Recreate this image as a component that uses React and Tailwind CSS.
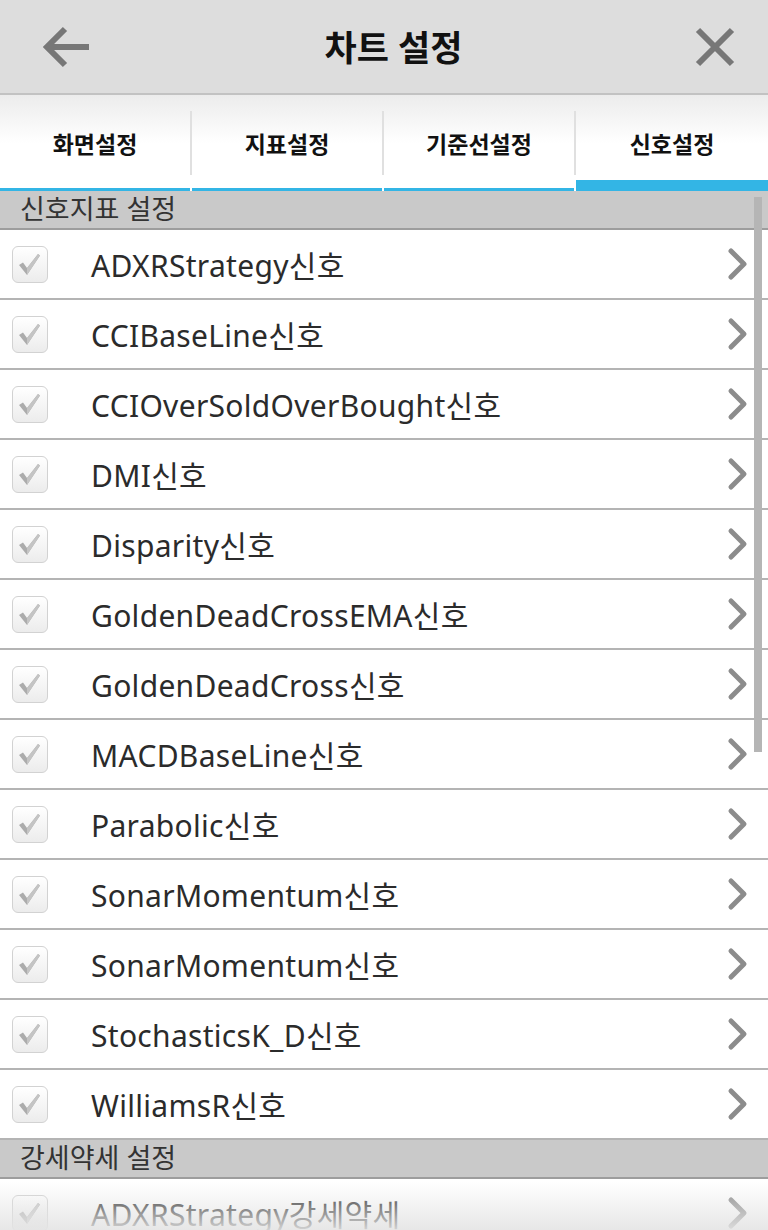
import React from "react";

const SIGNALS = [
  "ADXRStrategy신호",
  "CCIBaseLine신호",
  "CCIOverSoldOverBought신호",
  "DMI신호",
  "Disparity신호",
  "GoldenDeadCrossEMA신호",
  "GoldenDeadCross신호",
  "MACDBaseLine신호",
  "Parabolic신호",
  "SonarMomentum신호",
  "SonarMomentum신호",
  "StochasticsK_D신호",
  "WilliamsR신호",
];

const TABS = ["화면설정", "지표설정", "기준선설정", "신호설정"];

const FONT = { fontFamily: '"Noto Sans", "Noto Sans CJK KR", sans-serif' };

function CheckBox() {
  return (
    <div className="ml-3 flex h-[37px] w-9 shrink-0 items-center justify-center rounded-md border border-[#d2d2d2] bg-gradient-to-b from-white to-[#ececec]">
      <svg width="26" height="26" viewBox="0 0 26 26">
        <path d="M2 14 L6 11.5 L10 17 L21 3 L23 4.5 L10 24 Z" fill="#acacac" />
        <path d="M10 17 L21 3 L23 4.5 L10 24 Z" fill="#c4c4c4" />
      </svg>
    </div>
  );
}

function Chevron() {
  return (
    <svg width="22" height="34" viewBox="0 0 22 34" className="ml-auto mr-[19px] shrink-0">
      <polyline points="4,4 17,17 4,30" fill="none" stroke="#8c8c8c" strokeWidth="5" strokeLinecap="round" strokeLinejoin="round" />
    </svg>
  );
}

function Row({ label }) {
  return (
    <div className="flex h-[70px] items-center border-b-2 border-[#b4b4b4] bg-white">
      <CheckBox />
      <span className="ml-[43px] pt-[2px] text-[30px] tracking-[0.3px] whitespace-nowrap text-[#2b2b2b]" style={FONT}>
        {label}
      </span>
      <Chevron />
    </div>
  );
}

function Section({ title }) {
  return (
    <div className="flex h-[39px] items-center border-b-2 border-[#9d9d9d] bg-[#c9c9c9] pl-[20px]">
      <span className="text-[27px] text-[#333]" style={FONT}>
        {title}
      </span>
    </div>
  );
}

export default function App() {
  return (
    <div className="relative h-[1230px] w-[768px] overflow-hidden bg-white" style={FONT}>
      {/* top bar */}
      <div className="flex h-[95px] items-center border-b-2 border-[#c2c2c2] bg-[#dddddd]">
        <svg width="50" height="46" viewBox="0 0 50 46" className="ml-[42px]">
          <path d="M47 23 H6 M23 5 L5 23 L23 41" fill="none" stroke="#777" strokeWidth="6" />
        </svg>
        <div className="flex-1 pt-[4px] text-center text-[35px] font-bold text-[#111]">차트 설정</div>
        <svg width="40" height="40" viewBox="0 0 40 40" className="mr-[33px]">
          <path d="M3 3 L37 37 M37 3 L3 37" fill="none" stroke="#777" strokeWidth="6" />
        </svg>
      </div>

      {/* tabs */}
      <div className="grid h-[96px] grid-cols-4 bg-gradient-to-b from-[#ececec] via-white to-white">
        {TABS.map((t, i) => {
          const active = i === 3;
          return (
            <div key={t} className="flex flex-col">
              <div
                className={
                  "mt-[16px] flex h-[64px] items-center justify-center pt-[3px] text-[23px] font-bold text-[#111] " +
                  (i < 3 ? "border-r-2 border-[#e0e0e0]" : "")
                }
              >
                {t}
              </div>
              <div className="flex flex-1 items-end">
                <div className={active ? "h-[11px] w-full bg-[#33b5e5]" : "mr-[2px] h-[3px] w-full bg-[#33b5e5]"} />
              </div>
            </div>
          );
        })}
      </div>

      {/* list */}
      <div className="relative">
        <Section title="신호지표 설정" />
        {SIGNALS.map((s, i) => (
          <Row key={i} label={s} />
        ))}
        <Section title="강세약세 설정" />
        <Row label="ADXRStrategy강세약세" />
        <div className="absolute right-[6px] top-[6px] h-[555px] w-2 bg-[#b5b5b5]" />
      </div>

      {/* bottom fade */}
      <div className="absolute bottom-0 left-0 h-[48px] w-full bg-gradient-to-b from-white/0 to-[#e4e4e4]/90" />
    </div>
  );
}
